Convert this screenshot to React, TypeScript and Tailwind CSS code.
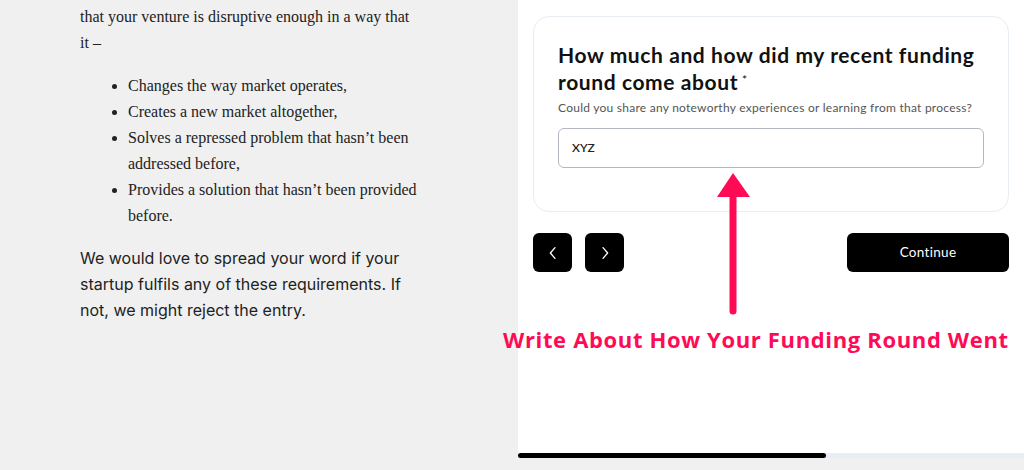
import React from "react";

const listItems = [
  "Changes the way market operates,",
  "Creates a new market altogether,",
  "Solves a repressed problem that hasn\u2019t been addressed before,",
  "Provides a solution that hasn\u2019t been provided before.",
];

const App = () => {
  return (
    <div className="relative flex h-[470px] w-[1024px] overflow-hidden bg-[#f0f0f0]">
      {/* article side */}
      <div className="w-[518px] shrink-0 pl-[80px] pt-[4px]">
        <div className="w-[338px] font-['Liberation_Serif',serif] text-[16px] leading-[26px] text-[#222]">
          <p>that your venture is disruptive enough in a way that it &ndash;</p>
          <ul className="mt-[17px] list-disc pl-[48px]">
            {listItems.map((item) => (
              <li key={item}>{item}</li>
            ))}
          </ul>
        </div>
        <p className="mt-[16px] w-[335px] font-['Inter',sans-serif] text-[16px] leading-[26px] text-[#222]">
          We would love to spread your word if your startup fulfils any of these requirements. If not, we might reject
          the entry.
        </p>
      </div>

      {/* form side */}
      <div className="flex w-[506px] flex-col">
        <div className="h-[453px] bg-white px-[15px] pt-[16px]">
          <div className="rounded-[16px] border border-[#e8ecf3] px-[24px] pb-[43px] pt-[24px]">
            <h2 className="font-['Lato',sans-serif] text-[21px] font-bold leading-[27px] tracking-[0.6px] text-[#111]">
              How much and how did my recent funding round come about
              <sup className="ml-[4px] text-[12px] font-normal">*</sup>
            </h2>
            <p className="mt-[4px] whitespace-nowrap font-['Lato',sans-serif] text-[12px] tracking-[0.25px] text-[#555]">
              Could you share any noteworthy experiences or learning from that process?
            </p>
            <div className="mt-[11px] flex h-[40px] items-center rounded-[6px] border border-[#b3b7c4] px-[13px] font-['Lato',sans-serif] text-[12px] font-semibold text-[#222]">
              XYZ
            </div>
          </div>

          <div className="mt-[21px] flex items-center">
            <button className="flex h-[39px] w-[39px] items-center justify-center rounded-[6px] bg-black text-white">
              <svg width="16" height="16" viewBox="0 0 24 24" fill="none" stroke="currentColor" strokeWidth="2" strokeLinecap="round" strokeLinejoin="round">
                <path d="M15 4l-7 8 7 8" />
              </svg>
            </button>
            <button className="ml-[13px] flex h-[39px] w-[39px] items-center justify-center rounded-[6px] bg-black text-white">
              <svg width="16" height="16" viewBox="0 0 24 24" fill="none" stroke="currentColor" strokeWidth="2" strokeLinecap="round" strokeLinejoin="round">
                <path d="M9 4l7 8-7 8" />
              </svg>
            </button>
            <button className="ml-auto h-[39px] w-[162px] rounded-[6px] bg-black font-['Lato',sans-serif] text-[13.5px] tracking-[0.3px] text-white">
              Continue
            </button>
          </div>
        </div>
        <div className="flex h-[5px] bg-[#e9edf5]">
          <div className="h-full w-[308px] rounded-full bg-black" />
        </div>
      </div>

      {/* annotation arrow */}
      <svg className="absolute left-[714px] top-[170px]" width="40" height="148" viewBox="0 0 40 148">
        <path d="M19 3 L36 27 L3 27 Z" fill="#ff0a55" />
        <line x1="19" y1="24" x2="19" y2="141" stroke="#ff0a55" strokeWidth="7" strokeLinecap="round" />
      </svg>

      {/* annotation label */}
      <div className="absolute left-[503px] top-[323px] font-['Open_Sans',sans-serif] text-[22px] font-bold tracking-[0.65px] text-[#ff0a55]">
        Write About How Your Funding Round Went
      </div>
    </div>
  );
};

export default App;
